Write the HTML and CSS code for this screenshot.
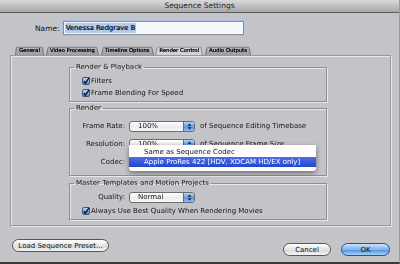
FILE: index.html
```html
<!DOCTYPE html>
<html lang="en">

<head>
    <meta charset="UTF-8">
    <title>Sequence Settings</title>
    <link rel="stylesheet" href="styles.css">
</head>

<body>
    <div class="window">
        <div class="titlebar">Sequence Settings</div>

        <div class="name-row">
            <span class="name-label">Name:</span>
            <div class="name-input"><span class="selected">Venessa Redgrave B</span></div>
        </div>

        <div class="tabs">
            <div class="tab">General</div>
            <div class="tab">Video Processing</div>
            <div class="tab">Timeline Options</div>
            <div class="tab active">Render Control</div>
            <div class="tab">Audio Outputs</div>
        </div>

        <div class="pane">
            <fieldset class="group group-playback">
                <legend>Render &amp; Playback</legend>
                <div class="check-row">
                    <svg class="checkbox" width="8" height="8" viewBox="0 0 8 8">
                        <defs>
                            <linearGradient id="cb" x1="0" y1="0" x2="0" y2="1">
                                <stop offset="0" stop-color="#c8ddf6" />
                                <stop offset="1" stop-color="#4f89d6" />
                            </linearGradient>
                        </defs>
                        <rect x="0.5" y="0.5" width="7" height="7" rx="1.5" fill="url(#cb)" stroke="#3b5883" />
                        <path d="M1.8 4.2 L3.3 6.2 L7.2 0.6" fill="none" stroke="#0b1838" stroke-width="1.4" />
                    </svg>
                    <span>Filters</span>
                </div>
                <div class="check-row">
                    <svg class="checkbox" width="8" height="8" viewBox="0 0 8 8">
                        <rect x="0.5" y="0.5" width="7" height="7" rx="1.5" fill="url(#cb)" stroke="#3b5883" />
                        <path d="M1.8 4.2 L3.3 6.2 L7.2 0.6" fill="none" stroke="#0b1838" stroke-width="1.4" />
                    </svg>
                    <span>Frame Blending For Speed</span>
                </div>
            </fieldset>

            <fieldset class="group group-render">
                <legend>Render</legend>
                <div class="field-row">
                    <span class="field-label">Frame Rate:</span>
                    <div class="popup">
                        <span class="popup-value">100%</span>
                        <span class="popup-arrow">
                            <svg width="9" height="9" viewBox="0 0 9 9">
                                <path d="M2.5 3.8 L4.5 1.6 L6.5 3.8Z M2.5 5.2 L4.5 7.4 L6.5 5.2Z" fill="#0c2150" />
                            </svg>
                        </span>
                    </div>
                    <span class="field-note">of Sequence Editing Timebase</span>
                </div>
                <div class="field-row">
                    <span class="field-label">Resolution:</span>
                    <div class="popup">
                        <span class="popup-value">100%</span>
                        <span class="popup-arrow">
                            <svg width="9" height="9" viewBox="0 0 9 9">
                                <path d="M2.5 3.8 L4.5 1.6 L6.5 3.8Z M2.5 5.2 L4.5 7.4 L6.5 5.2Z" fill="#0c2150" />
                            </svg>
                        </span>
                    </div>
                    <span class="field-note">of Sequence Frame Size</span>
                </div>
                <div class="field-row codec-row">
                    <span class="field-label">Codec:</span>
                    <!-- open popup menu -->
                    <ul class="menu">
                        <li>Same as Sequence Codec</li>
                        <li class="highlight">Apple ProRes 422 [HDV, XDCAM HD/EX only]</li>
                    </ul>
                </div>
            </fieldset>

            <fieldset class="group group-master">
                <legend>Master Templates and Motion Projects</legend>
                <div class="field-row quality-row">
                    <span class="field-label">Quality:</span>
                    <div class="popup">
                        <span class="popup-value">Normal</span>
                        <span class="popup-arrow">
                            <svg width="9" height="9" viewBox="0 0 9 9">
                                <path d="M2.5 3.8 L4.5 1.6 L6.5 3.8Z M2.5 5.2 L4.5 7.4 L6.5 5.2Z" fill="#0c2150" />
                            </svg>
                        </span>
                    </div>
                </div>
                <div class="check-row">
                    <svg class="checkbox" width="8" height="8" viewBox="0 0 8 8">
                        <rect x="0.5" y="0.5" width="7" height="7" rx="1.5" fill="url(#cb)" stroke="#3b5883" />
                        <path d="M1.8 4.2 L3.3 6.2 L7.2 0.6" fill="none" stroke="#0b1838" stroke-width="1.4" />
                    </svg>
                    <span>Always Use Best Quality When Rendering Movies</span>
                </div>
            </fieldset>
        </div>

        <div class="footer">
            <button class="btn btn-load">Load Sequence Preset...</button>
            <div class="footer-right">
                <button class="btn btn-cancel">Cancel</button>
                <button class="btn btn-ok">OK</button>
            </div>
        </div>
    </div>
</body>

</html>
```

FILE: styles.css
```css
body {
    margin: 0;
    font-family: "DejaVu Sans", sans-serif;
    font-size: 7px;
    color: #161616;
    background: #c4c4c8;
}

.window {
    height: 262px;
    border-bottom: 2px solid #3a3a3a;
    border-right: 1px solid #9a9a9e;
    display: flex;
    flex-direction: column;
}

.titlebar {
    height: 12px;
    line-height: 12px;
    text-align: center;
    font-size: 7.5px;
    color: #222;
    background: linear-gradient(#d8d8d8, #a8a8a8);
    border-bottom: 1px solid #5c5c5c;
}

/* name field */
.name-row {
    display: flex;
    align-items: center;
    margin-top: 8px;
    padding-left: 35px;
    gap: 3px;
}

.name-label {
    font-size: 7.5px;
}

.name-input {
    box-sizing: border-box;
    width: 181px;
    height: 14px;
    padding: 1px 1px;
    background: #f7f8fb;
    border: 1px solid #8a8e96;
    box-shadow: 0 0 0 1px #a9c3e6;
    display: flex;
    align-items: stretch;
}

.selected {
    background: #b4cbe8;
    color: #0c1c40;
    font-size: 6.8px;
    line-height: 10px;
    padding: 0 1px;
    text-shadow: 0.3px 0 0 #0c1c40;
}

/* tabs */
.tabs {
    display: flex;
    gap: 2px;
    margin-top: 11px;
    padding-left: 15px;
    height: 9px;
}

.tab {
    position: relative;
    padding: 0 4px;
    font-size: 5.3px;
    line-height: 9px;
    color: #000;
    text-shadow: 0.2px 0 0 #000;
    z-index: 0;
}

.tab::before {
    content: "";
    position: absolute;
    inset: 0;
    z-index: -1;
    background: linear-gradient(#b6b6ba, #9e9ea2);
    border: 1px solid #707074;
    border-bottom: none;
    border-radius: 2px 2px 0 0;
    transform: perspective(12px) rotateX(6deg);
    transform-origin: bottom;
}

.tab.active::before {
    background: #d2d2d6;
    border-color: #8a8a8e;
}

/* tab pane */
.pane {
    margin: 0 8px 0 10px;
    padding: 7px 0 5px 58px;
    border: 1px solid #98989c;
    box-shadow: inset 1px 1px 0 #e6e6ea, 1px 1px 0 #e6e6ea;
}

.group {
    box-sizing: border-box;
    width: 258px;
    margin: 0;
    padding: 0 0 0 4px;
    border: 1px solid #8e8e92;
    box-shadow: inset 1px 1px 0 #e8e8ec, 1px 1px 0 #e8e8ec;
    min-inline-size: 0;
    position: relative;
}

.group legend {
    padding: 0 2px;
    line-height: 8px;
    font-size: 7px;
}

.group-playback {
    padding-top: 4px;
    padding-bottom: 2px;
}

.group-render {
    margin-top: 2px;
    padding-top: 5px;
    padding-bottom: 4px;
}

.group-master {
    margin-top: 3px;
    padding-top: 3px;
    padding-bottom: 1px;
}

.check-row {
    display: flex;
    align-items: center;
    gap: 1px;
    height: 12px;
    padding-left: 8px;
}

.group-master .check-row {
    height: 14px;
}

.field-row {
    display: flex;
    align-items: center;
    height: 18px;
    padding-left: 8px;
}

.quality-row {
    height: 14px;
}

.field-label {
    width: 43px;
    text-align: right;
    margin-right: 4px;
}

.field-note {
    margin-left: 5px;
}

/* popup buttons */
.popup {
    box-sizing: border-box;
    width: 66px;
    height: 11px;
    display: flex;
    align-items: center;
    border: 1px solid #6c6c70;
    border-radius: 3px;
    background: linear-gradient(#ffffff, #ececec 50%, #f8f8f8);
    overflow: hidden;
}

.popup-value {
    flex: 1;
    padding-left: 8px;
}

.popup-arrow {
    width: 10px;
    height: 100%;
    display: flex;
    align-items: center;
    justify-content: center;
    border-left: 1px solid #4a6ea6;
    background: linear-gradient(#b9d4f4, #5d97e0 55%, #8fbdf0);
}

/* open menu */
.codec-row {
    position: relative;
}

.menu {
    position: absolute;
    left: 55px;
    top: -8px;
    width: 187px;
    margin: 0;
    padding: 3px 0 4px;
    list-style: none;
    background: #fdfdfd;
    box-shadow: 0 2px 5px rgba(0, 0, 0, 0.45);
    border-radius: 0 0 3px 3px;
    z-index: 2;
}

.menu li {
    height: 9px;
    line-height: 9px;
    padding-left: 15px;
    font-size: 7px;
}

.menu li.highlight {
    height: 10px;
    line-height: 10px;
    background: linear-gradient(#4b70e6, #2346d0);
    color: white;
}

/* footer buttons */
.footer {
    display: flex;
    justify-content: space-between;
    align-items: flex-start;
    padding: 13px 9px 0 12px;
}

.footer-right {
    display: flex;
    gap: 10px;
    margin-top: 4px;
}

.btn {
    box-sizing: border-box;
    height: 13px;
    padding: 0;
    font-family: "DejaVu Sans", sans-serif;
    font-size: 7px;
    color: #111;
    border: 1px solid #56565a;
    border-radius: 7px;
    background: linear-gradient(#ffffff, #e4e4e4 50%, #d6d6d6 51%, #f4f4f4);
}

.btn-load {
    width: 97px;
}

.btn-cancel {
    width: 48px;
}

.btn-ok {
    width: 49px;
    border-color: #2e4f84;
    background: linear-gradient(#cfe3fb, #7fb2ef 50%, #4b8fe4 51%, #a6d0fa);
}
```
